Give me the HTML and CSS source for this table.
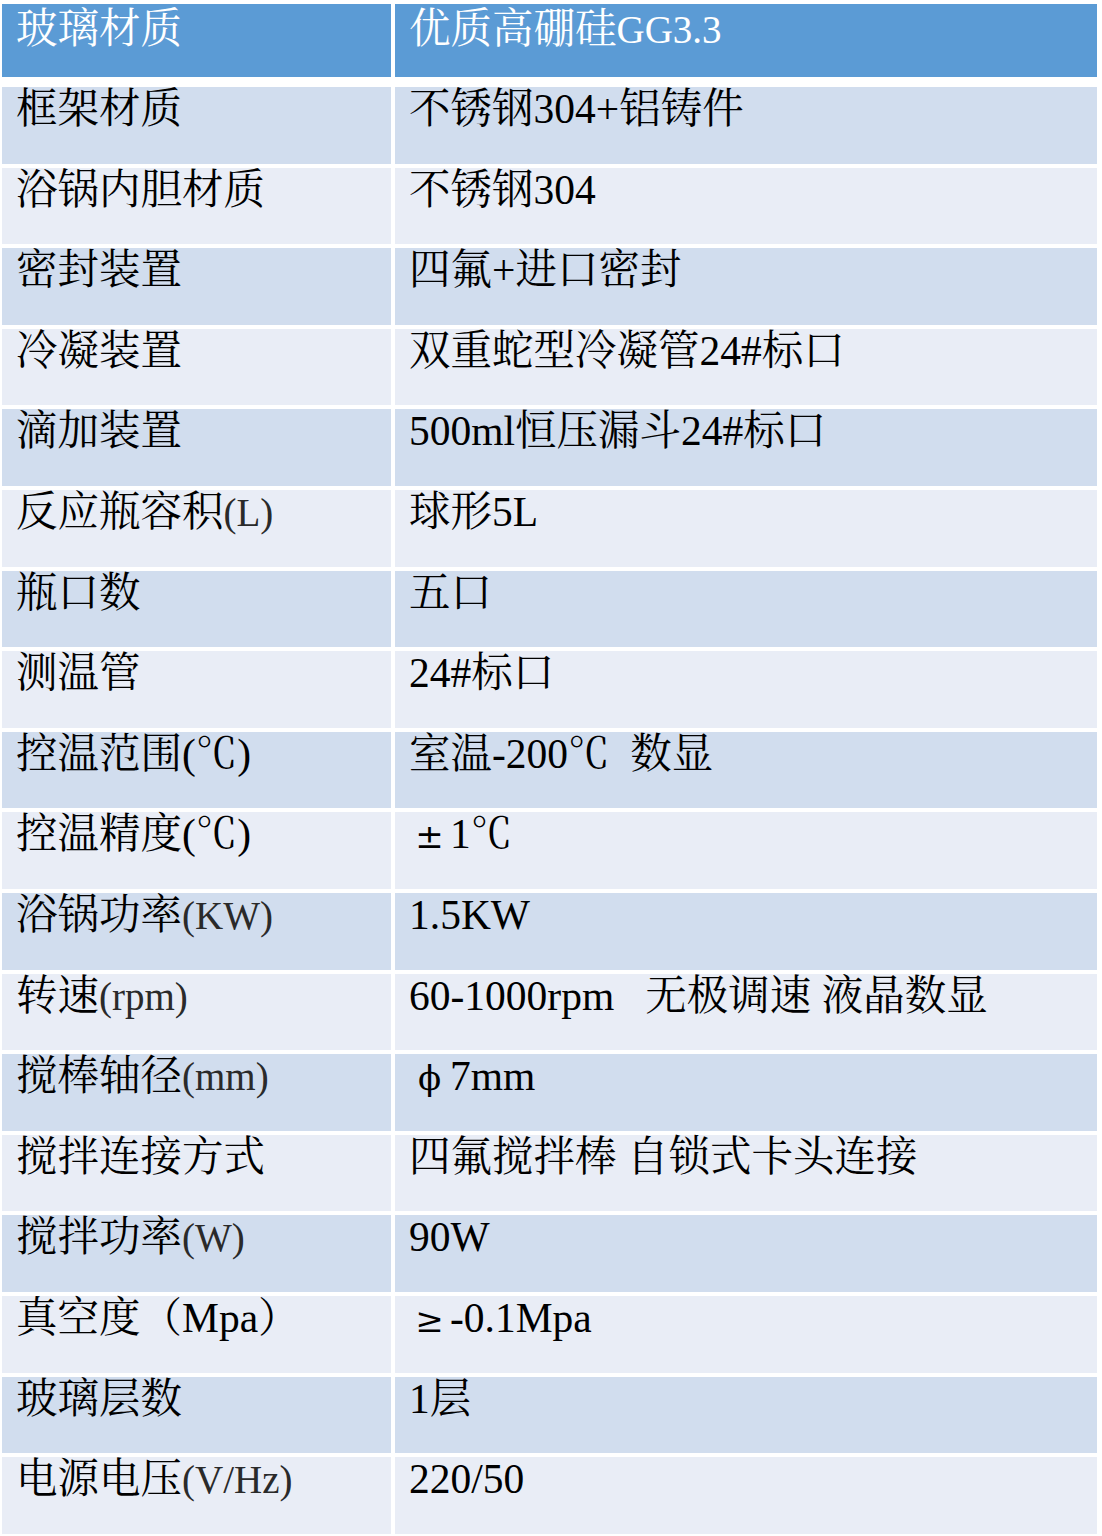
FILE: index.html
```html
<!DOCTYPE html>
<html lang="zh-CN">
<head>
<meta charset="utf-8">
<title>参数表</title>
<link rel="stylesheet" href="styles.css">
</head>
<body>
<div class="sheet">
  <div class="head">
    <div class="cell">玻璃材质</div>
    <div class="cell">优质高硼硅<span class="tm">GG3.3</span></div>
  </div>
  <div class="rows">
    <div class="cell dark">框架材质</div><div class="cell dark">不锈钢304+铝铸件</div>
    <div class="cell light">浴锅内胆材质</div><div class="cell light">不锈钢304</div>
    <div class="cell dark">密封装置</div><div class="cell dark">四氟+进口密封</div>
    <div class="cell light">冷凝装置</div><div class="cell light">双重蛇型冷凝管24#标口</div>
    <div class="cell dark">滴加装置</div><div class="cell dark">500ml恒压漏斗24#标口</div>
    <div class="cell light">反应瓶容积<span class="tm">(L)</span></div><div class="cell light">球形5L</div>
    <div class="cell dark">瓶口数</div><div class="cell dark">五口</div>
    <div class="cell light">测温管</div><div class="cell light">24#标口</div>
    <div class="cell dark">控温范围(℃)</div><div class="cell dark">室温-200℃&nbsp; 数显</div>
    <div class="cell light">控温精度(℃)</div><div class="cell light"><span class="fw">±</span>1℃</div>
    <div class="cell dark">浴锅功率<span class="tm">(KW)</span></div><div class="cell dark">1.5KW</div>
    <div class="cell light">转速<span class="tm">(rpm)</span></div><div class="cell light">60-1000rpm&nbsp;&nbsp; 无极调速 液晶数显</div>
    <div class="cell dark">搅棒轴径<span class="tm">(mm)</span></div><div class="cell dark"><span class="fw">ϕ</span>7mm</div>
    <div class="cell light">搅拌连接方式</div><div class="cell light">四氟搅拌棒 自锁式卡头连接</div>
    <div class="cell dark">搅拌功率<span class="tm">(W)</span></div><div class="cell dark">90W</div>
    <div class="cell light">真空度（Mpa）</div><div class="cell light"><span class="fw">≥</span>-0.1Mpa</div>
    <div class="cell dark">玻璃层数</div><div class="cell dark">1层</div>
    <div class="cell light">电源电压<span class="tm">(V/Hz)</span></div><div class="cell light">220/50</div>
  </div>
</div>
</body>
</html>
```
FILE: styles.css
```css
html, body {
  margin: 0;
  padding: 0;
  background: #ffffff;
}

.sheet {
  padding: 4px 0 0 2px;
  width: 1095px;
  font-family: "Liberation Serif", "Noto Serif CJK SC", "Noto Sans CJK SC", serif;
  font-size: 41.5px;
  line-height: 44px;
  color: #000000;
}

.head {
  display: grid;
  grid-template-columns: 389px 702px;
  column-gap: 4px;
  height: 73px;
}

.cell {
  box-sizing: border-box;
  padding-left: 14px;
  padding-top: 0;
  white-space: pre;
}

.head .cell {
  background: #5b9bd5;
  color: #ffffff;
  padding-top: 3px;
}

.rows {
  margin-top: 10px;
  display: grid;
  grid-template-columns: 389px 702px;
  grid-auto-rows: 76.6px;
  column-gap: 4px;
  row-gap: 4px;
}

.dark {
  background: #d1ddee;
}

.light {
  background: #e9edf6;
}

.tm {
  font-family: "Liberation Serif", serif;
  font-size: 39px;
  color: #2a2a2a;
}

.head .tm {
  color: #ffffff;
}

.fw {
  display: inline-block;
  width: 41px;
  text-align: center;
  font-family: "DejaVu Serif", "Liberation Serif", serif;
  font-size: 34px;
}
```
